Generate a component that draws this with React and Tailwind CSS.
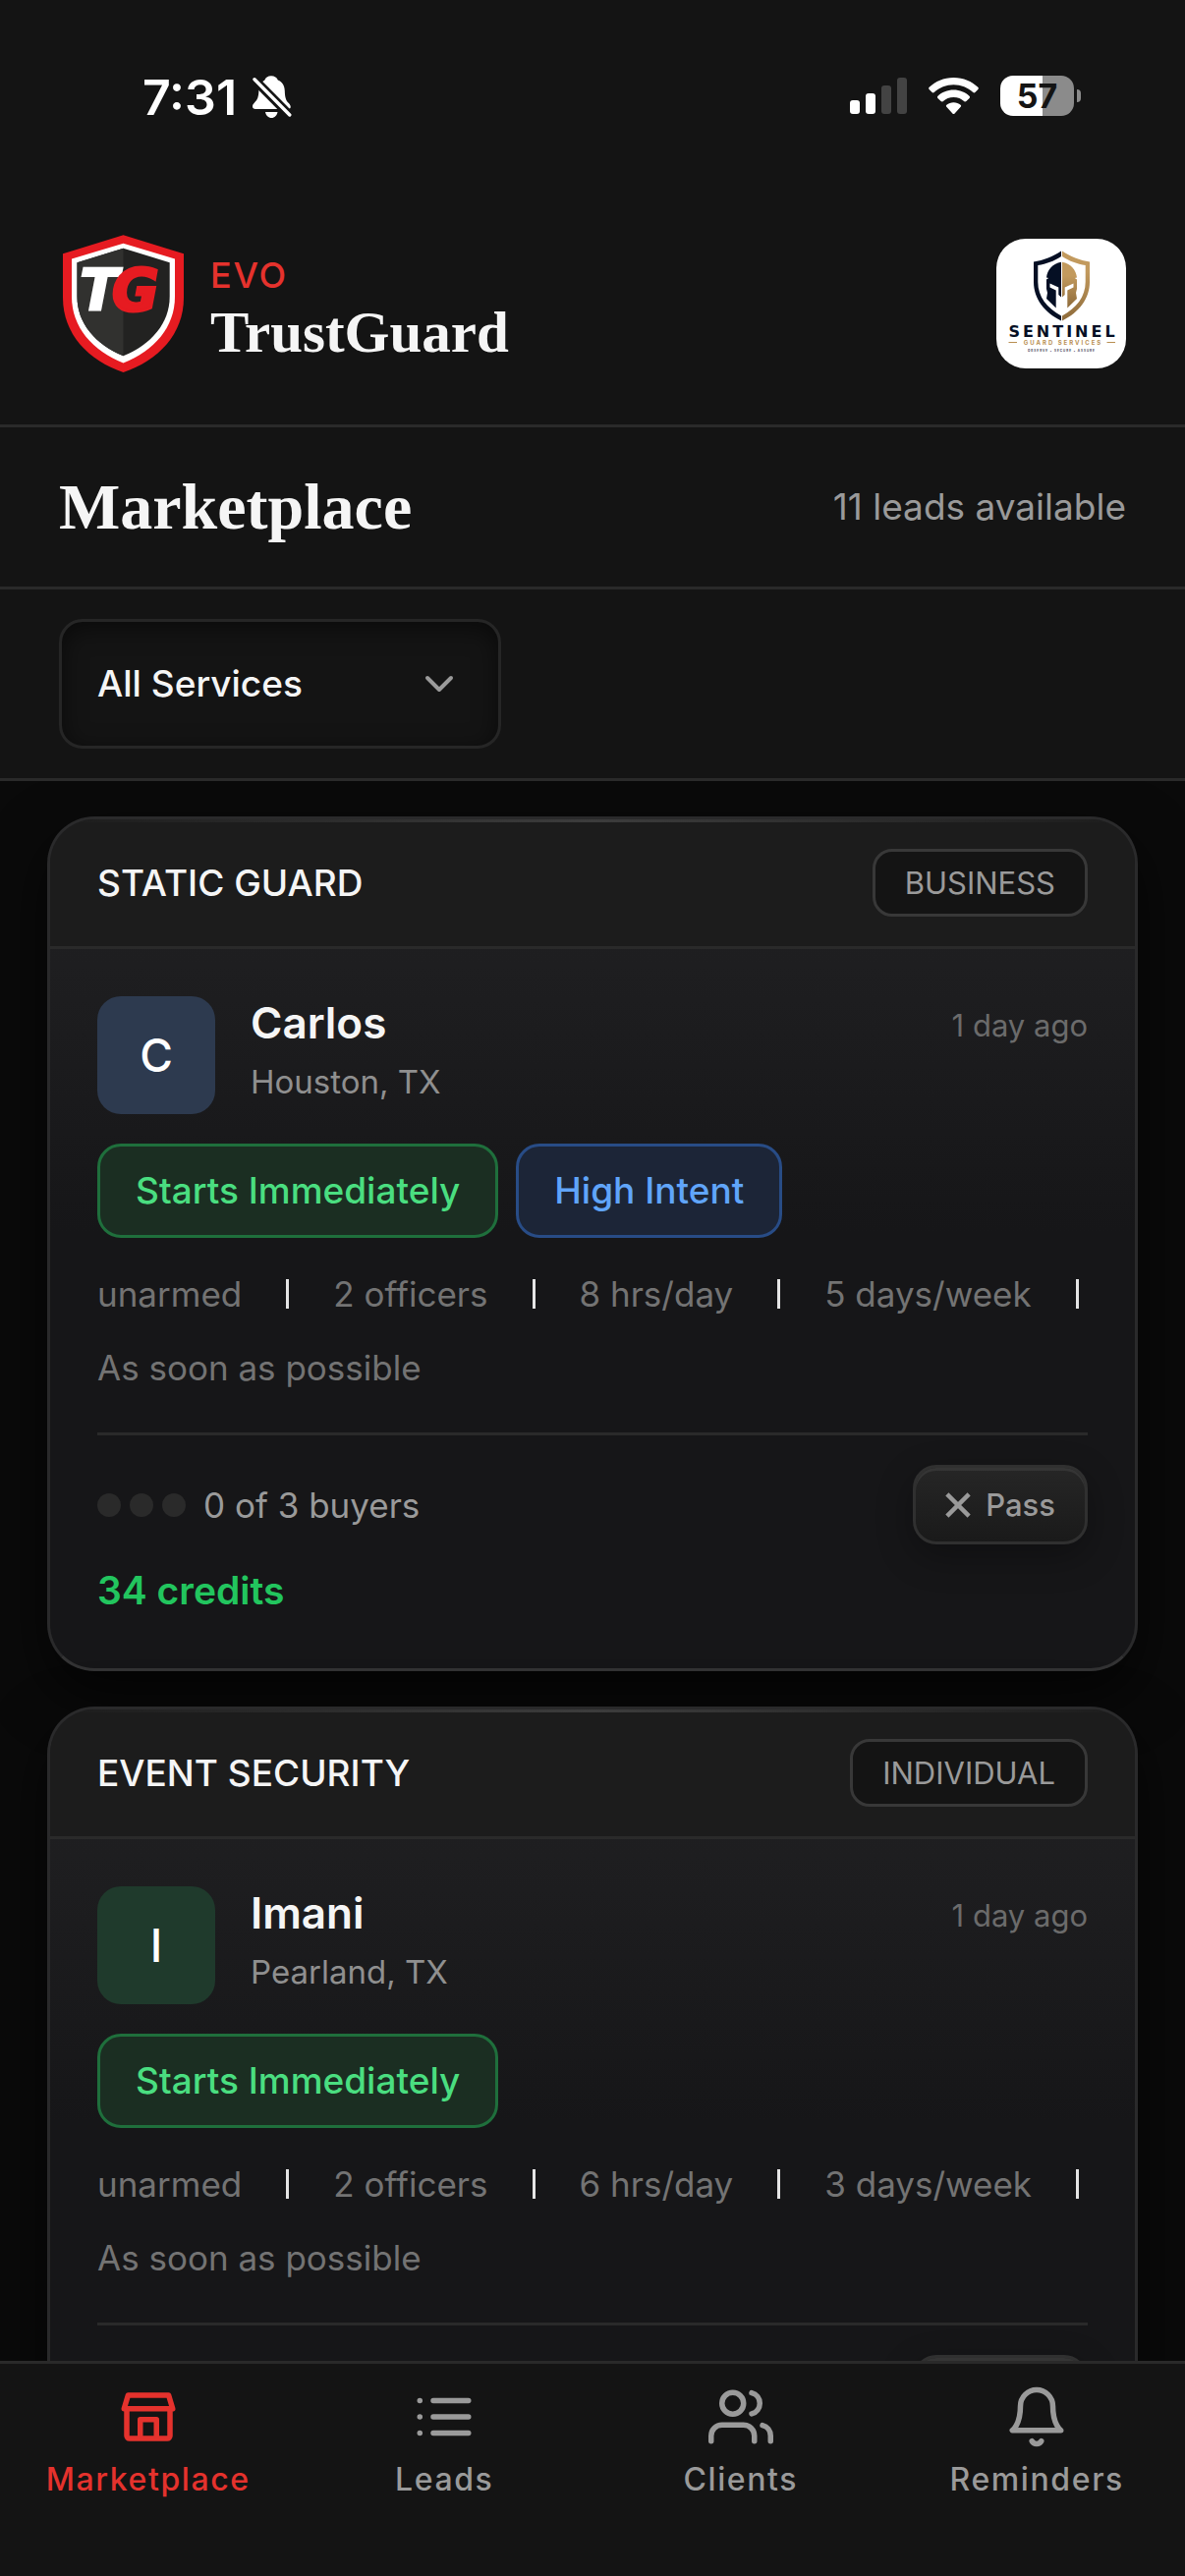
import React from 'react';

const leads = [
  {
    service: 'STATIC GUARD',
    type: 'BUSINESS',
    name: 'Carlos',
    city: 'Houston, TX',
    time: '1 day ago',
    avatar: 'bg-[#2d3a4f]',
    tags: ['Starts Immediately', 'High Intent'],
    meta: ['unarmed', '2 officers', '8 hrs/day', '5 days/week', 'As soon as possible'],
    credits: 34,
  },
  {
    service: 'EVENT SECURITY',
    type: 'INDIVIDUAL',
    name: 'Imani',
    city: 'Pearland, TX',
    time: '1 day ago',
    avatar: 'bg-[#1f3a2c]',
    tags: ['Starts Immediately'],
    meta: ['unarmed', '2 officers', '6 hrs/day', '3 days/week', 'As soon as possible'],
    credits: 34,
  },
];

const tagStyles = {
  'Starts Immediately': 'border-[#1f6f3c] bg-[#1b2e22] text-[#4ade80]',
  'High Intent': 'border-[#284c86] bg-[#1c2537] text-[#60a5fa]',
};

function BellOff() {
  return (
    <svg className="h-[43px] w-[40px]" viewBox="0 0 40 43" aria-label="Silent mode">
      <path
        d="M19 0.3c3.4 0 6 1.800 6.800 4.300C30.500 6.600 32.600 10.500 32.800 15.500c.2 7 1.200 9.700 4 12.600 1.400 1.500 2.200 2.800 1.900 4.200-.2 1.100-1.200 1.700-2.700 1.700H3c-1.900 0-3-1.100-3-2.800 0-1.500.8-2.400 2-3.700 3-3.100 4.200-5.500 4.400-12.700C6.600 9.700 8.700 6.500 12.400 4.600 13.200 2 15.600.3 19 .3z"
        fill="#fff"
      />
      <path d="M13 37h12.500c-.7 3.500-3 6-6.200 6s-5.600-2.500-6.300-6z" fill="#fff" />
      <path d="M0 2 38.500 41" stroke="#141414" strokeWidth="9" />
      <path d="M2 3.700 37.800 40" stroke="#fff" strokeWidth="3.400" strokeLinecap="round" />
    </svg>
  );
}

function StatusBar() {
  return (
    <div className="flex h-[186px] items-start justify-between pt-[77px] pr-[106px] pl-[145px]">
      <div className="flex items-center gap-4">
        <span className="text-[50px] leading-[42px] font-semibold text-white">7:31</span>
        <BellOff />
      </div>
      <div className="flex items-center gap-[22px]">
        <svg className="h-[37px] w-[58px]" viewBox="0 0 58 37" aria-label="Signal">
          <rect x="0" y="23" width="10" height="14" rx="3" fill="#fff" />
          <rect x="16" y="16" width="10" height="21" rx="3" fill="#fff" />
          <rect x="32" y="8" width="10" height="29" rx="3" fill="#434343" />
          <rect x="48" y="0" width="10" height="37" rx="3" fill="#434343" />
        </svg>
        <svg className="h-[37px] w-[51px]" viewBox="0 0 51 37" aria-label="Wi-Fi">
          <g fill="#fff">
            <path d="M25.500 0C35.600 0 44 3.800 50.300 9.800c.7.6.7 1.500.1 2.100l-3 3.100c-.6.6-1.500.6-2.100 0C40 10.200 33 7.300 25.500 7.300S11 10.200 5.700 15c-.6.6-1.500.6-2.100 0l-3-3.100C0 11.300 0 10.400.7 9.800 7 3.800 15.400 0 25.500 0z" />
            <path d="M25.500 12.600c6.300 0 11.800 2.300 16 6.200.7.6.7 1.500.1 2.100l-3.200 3.200c-.6.6-1.400.6-2 .1-3-2.600-6.700-4.200-10.900-4.200s-7.900 1.600-10.900 4.200c-.6.5-1.400.5-2-.1l-3.200-3.200c-.6-.6-.6-1.500.1-2.100 4.200-3.900 9.700-6.200 16-6.200z" />
            <path d="M25.500 25.200c2.700 0 5.200 1 7.100 2.600.7.6.7 1.400.1 2l-6.100 6.600c-.6.7-1.600.7-2.200 0l-6.100-6.600c-.6-.6-.6-1.400.1-2 1.900-1.600 4.400-2.600 7.100-2.600z" />
          </g>
        </svg>
        <div className="flex items-center gap-[3px]">
          <div className="flex h-[41px] w-[75px] items-center justify-center rounded-[13px] bg-[linear-gradient(90deg,#fff_57%,#8b8b8b_57%)]">
            <span className="text-[34px] leading-[41px] font-bold text-[#141414]">57</span>
          </div>
          <div className="h-[13px] w-1 rounded-r-full bg-[#8b8b8b]" />
        </div>
      </div>
    </div>
  );
}

function TrustGuardLogo() {
  return (
    <svg className="h-[144px] w-[132px]" viewBox="0 0 132 144" role="img" aria-label="TrustGuard shield">
      <path d="M65.500 2.300 127 21.300V66C127 103 101 130 65.500 142 30 130 4 103 4 66V21.300z" fill="#e61b21" />
      <path d="M65.500 10.700 118 26.500V65c0 31-21 55-52.500 67.500C34 120 13 96 13 65V26.500z" fill="#fff" />
      <path d="M65.500 15.700 112.700 30.300V65c0 27-18.700 48.500-47.200 60.300C37 113.500 18.500 92 18.500 65V30.300z" fill="#222221" />
      <path d="M65.500 15.700V125.300C37 113.500 18.500 92 18.500 65V30.300z" fill="#31312f" />
      <text x="21" y="79" fontFamily="DejaVu Sans, sans-serif" fontSize="58" fontWeight="700" fontStyle="italic" fill="#fff" stroke="#fff" strokeWidth="2">T</text>
      <text x="54" y="79" fontFamily="DejaVu Sans, sans-serif" fontSize="58" fontWeight="700" fontStyle="italic" fill="#e61b21" stroke="#e61b21" strokeWidth="3">G</text>
    </svg>
  );
}

function SentinelLogo() {
  const shield = 'M66 12.500C58 18 48 22 38 23.500V44c0 17 11 31 28 39.500v-5C51.500 70.500 42.300 59 42.300 44V27C51 25.500 58.500 23 66 18z';
  const helmet = 'M66 23.700C57.500 25 51.700 31.500 51 39.500l2.200.5L51 41.500V51l1 4-1 6 9.700 9.500V52.500L54.500 49.500v-4L63.300 49.500V57L66 59.500z';
  return (
    <svg className="h-[132px] w-[132px] rounded-[30px] bg-white" viewBox="0 0 132 132" role="img" aria-label="Sentinel Guard Services">
      <defs>
        <linearGradient id="gold" x1="0" y1="0" x2="0" y2="1">
          <stop offset="0.300" stopColor="#c29a5e" />
          <stop offset="1" stopColor="#8d6a3a" />
        </linearGradient>
      </defs>
      <g fill="#050f24">
        <path d={shield} />
        <path d={helmet} />
      </g>
      <g fill="url(#gold)" transform="translate(133 0) scale(-1 1)">
        <path d={shield} />
        <path d={helmet} />
      </g>
      <text x="68" y="100" textAnchor="middle" fontFamily="DejaVu Sans, sans-serif" fontSize="16" fontWeight="700" letterSpacing="3" fill="#050f24">SENTINEL</text>
      <text x="68" y="108" textAnchor="middle" fontFamily="Inter, sans-serif" fontSize="6" fontWeight="700" letterSpacing="2" fill="#b98f52">GUARD SERVICES</text>
      <path d="M12.500 105.500h8.500M112.500 105.500h8.500" stroke="#b98f52" strokeWidth="1" />
      <text x="66.500" y="115" textAnchor="middle" fontFamily="Inter, sans-serif" fontSize="3" fontWeight="700" letterSpacing="1" fill="#3c4354">OBSERVE • SECURE • ASSURE</text>
    </svg>
  );
}

function LeadCard({ lead }) {
  return (
    <article className="relative overflow-hidden rounded-[48px] border-[3px] border-[#2a2a2b] border-b-[#333334] bg-[linear-gradient(180deg,#202022_0px,#1e1e20_150px,#161618_420px)] shadow-[0_24px_60px_rgba(0,0,0,0.6)]">
      <div className="absolute inset-x-0 top-0 h-[3px] bg-gradient-to-r from-transparent via-[#3c3c3c] to-transparent" />
      <header className="flex items-center justify-between border-b-[3px] border-[#2a2a2a] bg-[#1c1c1c] px-12 py-[30px]">
        <h2 className="text-[37px] leading-[69px] font-medium text-[#f5f5f5]">{lead.service}</h2>
        <span className="rounded-[20px] border-[3px] border-[#383838] bg-[#141414] px-[30px] text-[31px] leading-[63px] text-[#9a9a9a]">
          {lead.type}
        </span>
      </header>
      <div className="p-12">
        <div className="flex items-start gap-9">
          <div className={`flex size-[120px] items-center justify-center rounded-3xl text-[46px] font-medium text-white ${lead.avatar}`}>
            {lead.name[0]}
          </div>
          <div className="flex flex-1 flex-col gap-[9px]">
            <h3 className="text-[44px] leading-[54px] font-semibold text-[#f5f5f5]">{lead.name}</h3>
            <p className="text-[33px] leading-[48px] text-[#8f8f8f]">{lead.city}</p>
          </div>
          <time className="text-[31px] leading-[60px] text-[#6b6b6b]">{lead.time}</time>
        </div>
        <div className="mt-[30px] flex flex-wrap gap-[18px]">
          {lead.tags.map((tag) => (
            <span key={tag} className={`rounded-3xl border-[3px] px-9 text-[37px] leading-[90px] font-medium ${tagStyles[tag]}`}>
              {tag}
            </span>
          ))}
        </div>
        <div className="mt-[30px] flex flex-wrap items-center gap-x-[45px] gap-y-[21px]">
          {lead.meta.map((item, i) => (
            <React.Fragment key={item}>
              {i > 0 && <span className="h-[30px] w-[3px] bg-[#e5e5e5]" />}
              <span className="text-[35px] leading-[54px] text-[#737373]">{item}</span>
            </React.Fragment>
          ))}
        </div>
        <footer className="mt-[39px] border-t-[3px] border-[#2a2a2a] pt-[30px]">
          <div className="flex items-center justify-between">
            <div className="flex items-center gap-[18px]">
              <div className="flex gap-[9px]">
                <span className="size-6 rounded-full bg-[#2a2a2a]" />
                <span className="size-6 rounded-full bg-[#2a2a2a]" />
                <span className="size-6 rounded-full bg-[#2a2a2a]" />
              </div>
              <span className="text-[35px] leading-[54px] text-[#9a9a9a]">0 of 3 buyers</span>
            </div>
            <button
              type="button"
              className="flex items-center gap-[15px] rounded-3xl border-[3px] border-[#303030] bg-gradient-to-b from-[#262626] to-[#1a1a1a] px-[30px] text-[31px] leading-[75px] font-medium text-[#9a9a9a] shadow-[inset_0_3px_0_#353535,0_12px_36px_rgba(0,0,0,0.3)]"
            >
              <svg className="size-[26px]" viewBox="5 5 14 14" fill="none" stroke="currentColor" strokeWidth="2.400" aria-hidden="true">
                <path d="M18 6 6 18M6 6l12 12" />
              </svg>
              Pass
            </button>
          </div>
          <p className="mt-[15px] text-[39px] leading-[63px] font-semibold text-[#22c55e]">{lead.credits} credits</p>
        </footer>
      </div>
    </article>
  );
}

const tabs = [
  {
    label: 'Marketplace',
    active: true,
    icon: <path d="M3 9l1.500-5h15L21 9zM4 9v10a1 1 0 0 0 1 1h14a1 1 0 0 0 1-1V9M9 20v-7h6v7" />,
  },
  { label: 'Leads', icon: <path d="M8 6h13M8 12h13M8 18h13M3 6h.01M3 12h.01M3 18h.01" /> },
  {
    label: 'Clients',
    icon: (
      <>
        <path d="M17 21v-2a4 4 0 0 0-4-4H5a4 4 0 0 0-4 4v2" />
        <circle cx="9" cy="7" r="4" />
        <path d="M23 21v-2a4 4 0 0 0-3-3.870M16 3.130a4 4 0 0 1 0 7.750" />
      </>
    ),
  },
  { label: 'Reminders', icon: <path d="M18 8A6 6 0 0 0 6 8c0 7-3 9-3 9h18s-3-2-3-9M13.730 21a2 2 0 0 1-3.460 0" /> },
];

export default function App() {
  return (
    <div className="flex h-screen flex-col bg-[#0a0a0a] font-['Inter',sans-serif] text-[#f5f5f5]">
      <div className="bg-[#141414]">
        <StatusBar />
        <header className="flex items-center justify-between border-b-[3px] border-[#2a2a2a] px-[60px] py-[51px]">
          <div className="flex items-center gap-[22px]">
            <TrustGuardLogo />
            <div className="pt-1.5">
              <p className="text-[36px] leading-[52px] font-medium tracking-wider text-[#e5322d]">EVO</p>
              <p className="font-['Liberation_Serif',serif] text-[59px] leading-[64px] font-bold">TrustGuard</p>
            </div>
          </div>
          <SentinelLogo />
        </header>
        <section className="flex items-center justify-between border-b-[3px] border-[#2a2a2a] px-[60px]">
          <h1 className="font-['Liberation_Serif',serif] text-[66px] leading-[162px] font-bold">Marketplace</h1>
          <p className="text-[37px] text-[#9a9a9a]">11 leads available</p>
        </section>
        <section className="border-b-[3px] border-[#2a2a2a] px-[60px] py-[30px]">
          <div className="relative w-[450px]">
            <select
              aria-label="Service"
              className="h-[132px] w-full appearance-none rounded-3xl border-[3px] border-[#262626] bg-[#141414] px-9 text-[37px] font-medium text-[#f5f5f5] shadow-[inset_0_6px_24px_rgba(0,0,0,0.5)]"
            >
              <option>All Services</option>
            </select>
            <svg className="pointer-events-none absolute top-[42px] right-[39px] size-12" viewBox="0 0 24 24" fill="none" stroke="#9a9a9a" strokeWidth="2" strokeLinecap="round" strokeLinejoin="round" aria-hidden="true">
              <path d="m6 9 6 6 6-6" />
            </svg>
          </div>
        </section>
      </div>

      <main className="flex min-h-0 flex-1 flex-col gap-9 overflow-y-auto px-12 py-9 [scrollbar-width:none] *:shrink-0">
        {leads.map((lead) => (
          <LeadCard key={lead.name} lead={lead} />
        ))}
      </main>

      <nav className="grid h-[219px] grid-cols-4 border-t-[3px] border-[#2a2a2a] bg-[#141414] pt-[21px]">
        {tabs.map((tab) => (
          <a key={tab.label} href="#" className={`flex flex-col items-center gap-1.5 ${tab.active ? 'text-[#e5322d]' : 'text-[#9a9a9a]'}`}>
            <svg className="size-[66px]" viewBox="0 0 24 24" fill="none" stroke="currentColor" strokeWidth="2" strokeLinecap="round" strokeLinejoin="round" aria-hidden="true">
              {tab.icon}
            </svg>
            <span className="text-[32px] leading-[50px] font-medium tracking-wider">{tab.label}</span>
          </a>
        ))}
      </nav>
    </div>
  );
}
